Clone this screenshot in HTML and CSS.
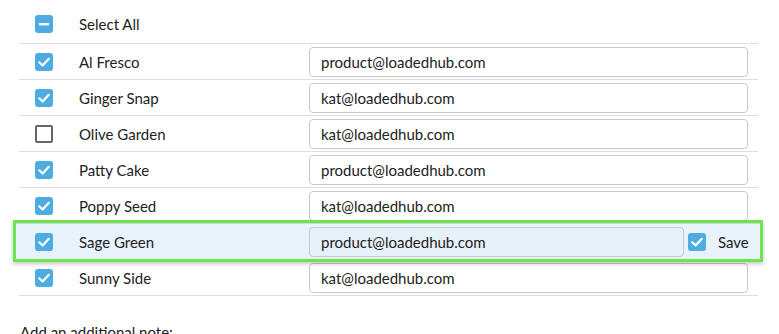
FILE: index.html
```html
<!DOCTYPE html>
<html>
<head>
<meta charset="utf-8">
<link rel="stylesheet" href="styles.css">
</head>
<body>
<div class="list">
  <div class="row head">
    <div class="cbcell"><span class="cb on"><svg viewBox="0 0 18 18"><rect x="4" y="8" width="10" height="2.4" fill="#fff"/></svg></span></div>
    <div class="name">Select All</div>
  </div>
  <div class="row">
    <div class="cbcell"><span class="cb on"><svg viewBox="0 0 18 18"><path d="M4.2 9.3 L7.6 12.4 L13.8 5.8" fill="none" stroke="#fff" stroke-width="2.2" stroke-linecap="round" stroke-linejoin="round"/></svg></span></div>
    <div class="name">Al Fresco</div>
    <input class="email" value="product@loadedhub.com">
  </div>
  <div class="row">
    <div class="cbcell"><span class="cb on"><svg viewBox="0 0 18 18"><path d="M4.2 9.3 L7.6 12.4 L13.8 5.8" fill="none" stroke="#fff" stroke-width="2.2" stroke-linecap="round" stroke-linejoin="round"/></svg></span></div>
    <div class="name">Ginger Snap</div>
    <input class="email" value="kat@loadedhub.com">
  </div>
  <div class="row">
    <div class="cbcell"><span class="cb off"></span></div>
    <div class="name">Olive Garden</div>
    <input class="email" value="kat@loadedhub.com">
  </div>
  <div class="row">
    <div class="cbcell"><span class="cb on"><svg viewBox="0 0 18 18"><path d="M4.2 9.3 L7.6 12.4 L13.8 5.8" fill="none" stroke="#fff" stroke-width="2.2" stroke-linecap="round" stroke-linejoin="round"/></svg></span></div>
    <div class="name">Patty Cake</div>
    <input class="email" value="product@loadedhub.com">
  </div>
  <div class="row">
    <div class="cbcell"><span class="cb on"><svg viewBox="0 0 18 18"><path d="M4.2 9.3 L7.6 12.4 L13.8 5.8" fill="none" stroke="#fff" stroke-width="2.2" stroke-linecap="round" stroke-linejoin="round"/></svg></span></div>
    <div class="name">Poppy Seed</div>
    <input class="email" value="kat@loadedhub.com">
  </div>
  <div class="row selected">
    <div class="cbcell"><span class="cb on"><svg viewBox="0 0 18 18"><path d="M4.2 9.3 L7.6 12.4 L13.8 5.8" fill="none" stroke="#fff" stroke-width="2.2" stroke-linecap="round" stroke-linejoin="round"/></svg></span></div>
    <div class="name">Sage Green</div>
    <input class="email editing" value="product@loadedhub.com">
    <span class="cb on save-cb"><svg viewBox="0 0 18 18"><path d="M4.2 9.3 L7.6 12.4 L13.8 5.8" fill="none" stroke="#fff" stroke-width="2.2" stroke-linecap="round" stroke-linejoin="round"/></svg></span>
    <span class="save">Save</span>
  </div>
  <div class="row">
    <div class="cbcell"><span class="cb on"><svg viewBox="0 0 18 18"><path d="M4.2 9.3 L7.6 12.4 L13.8 5.8" fill="none" stroke="#fff" stroke-width="2.2" stroke-linecap="round" stroke-linejoin="round"/></svg></span></div>
    <div class="name">Sunny Side</div>
    <input class="email" value="kat@loadedhub.com">
  </div>
</div>
<p class="note">Add an additional note:</p>
</body>
</html>
```
FILE: styles.css
```css
html, body {
  margin: 0;
  padding: 0;
  background: #fff;
}
body {
  font-family: Lato, "Noto Sans", sans-serif;
  font-size: 15px;
  color: #222;
}
.list {
  margin-left: 19px;
  width: 739px;
}
.row {
  display: flex;
  align-items: center;
  height: 35px;
  border-bottom: 1px solid #dedede;
}
.row.head {
  height: 38px;
  padding-top: 5px;
  align-items: center;
}
.cbcell {
  width: 60px;
  flex: none;
  display: flex;
  align-items: center;
  padding-left: 16px;
  box-sizing: border-box;
}
.cb {
  width: 18px;
  height: 18px;
  box-sizing: border-box;
  border-radius: 3px;
  display: block;
  flex: none;
}
.cb svg {
  display: block;
  width: 18px;
  height: 18px;
}
.cb.on {
  background: #4eace2;
}
.cb.off {
  border: 2px solid #666;
  border-radius: 2px;
  background: #fff;
}
.name {
  width: 230px;
  flex: none;
}
.email {
  flex: 1;
  min-width: 0;
  height: 30px;
  box-sizing: border-box;
  margin: 0 10px 0 0;
  padding: 0 11px;
  border: 1px solid #c8c8c8;
  border-radius: 4px;
  font-family: inherit;
  font-size: 15px;
  color: #222;
  background: #fff;
  outline: none;
}
.row.selected {
  position: relative;
  z-index: 0;
}
.row.selected::before {
  content: "";
  position: absolute;
  z-index: -1;
  top: -4px;
  bottom: -3px;
  left: -6px;
  right: -5px;
  border: 3px solid #6ce64c;
  background: #e8f2fa;
  box-shadow: 0 2px 4px rgba(0, 0, 0, 0.22), inset 0 1px 0 #d2d6da;
}
.email.editing {
  background: #e6f1fa;
  margin-right: 4px;
}
.save-cb {
  margin-right: 12px;
}
.save {
  margin-right: 10px;
  width: 30px;
  white-space: nowrap;
}
.note {
  margin: 27px 0 0 20px;
  font-size: 15px;
}
```
